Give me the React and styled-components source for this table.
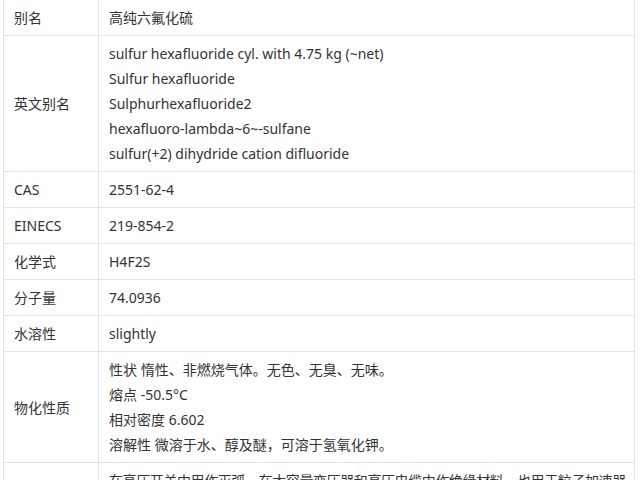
import React from 'react'
import styled, { createGlobalStyle } from 'styled-components'

const GlobalStyle = createGlobalStyle`
  html, body {
    margin: 0;
    padding: 0;
    background: #fff;
  }
  body {
    font-family: "Noto Sans", "Noto Sans CJK SC", sans-serif;
    overflow: hidden;
  }
`

const Wrap = styled.div`
  padding: 0 5px 0 3px;
  box-sizing: border-box;
  width: 640px;
  height: 480px;
  overflow: hidden;
`

const Table = styled.table`
  width: 632px;
  margin-top: -1px;
  border-collapse: collapse;
  table-layout: fixed;
  font-size: 14px;
  line-height: 25px;
  color: #333;
`

const Label = styled.td`
  width: 74px;
  padding: 5px 10px;
  border: 1px solid #e3e3e3;
  vertical-align: middle;
`

const Value = styled.td`
  padding: 5px 0 5px 10px;
  border: 1px solid #e3e3e3;
  vertical-align: middle;
  word-break: break-all;
`

const Line = styled.div`
  height: ${p => (p.$wrap ? 'auto' : '25px')};
  white-space: ${p => (p.$wrap ? 'normal' : 'nowrap')};
  letter-spacing: ${p => (p.$wrap ? '-0.4px' : 'normal')};
`

const rows = [
  { label: '别名', lines: ['高纯六氟化硫'] },
  {
    label: '英文别名',
    lines: [
      'sulfur hexafluoride cyl. with 4.75 kg (~net)',
      'Sulfur hexafluoride',
      'Sulphurhexafluoride2',
      'hexafluoro-lambda~6~-sulfane',
      'sulfur(+2) dihydride cation difluoride'
    ]
  },
  { label: 'CAS', lines: ['2551-62-4'] },
  { label: 'EINECS', lines: ['219-854-2'] },
  { label: '化学式', lines: ['H4F2S'] },
  { label: '分子量', lines: ['74.0936'] },
  { label: '水溶性', lines: ['slightly'] },
  {
    label: '物化性质',
    lines: [
      '性状 惰性、非燃烧气体。无色、无臭、无味。',
      '熔点 -50.5°C',
      '相对密度 6.602',
      '溶解性 微溶于水、醇及醚，可溶于氢氧化钾。'
    ]
  },
  {
    label: '用途',
    wrap: true,
    lines: [
      '在高压开关中用作灭弧，在大容量变压器和高压电缆中作绝缘材料，也用于粒子加速器和避雷器中。'
    ]
  }
]

export default function App() {
  return (
    <Wrap>
      <GlobalStyle />
      <Table>
        <tbody>
          {rows.map(r => (
            <tr key={r.label}>
              <Label>
                <Line>{r.label}</Line>
              </Label>
              <Value>
                {r.lines.map(l => (
                  <Line key={l} $wrap={r.wrap}>{l}</Line>
                ))}
              </Value>
            </tr>
          ))}
        </tbody>
      </Table>
    </Wrap>
  )
}
